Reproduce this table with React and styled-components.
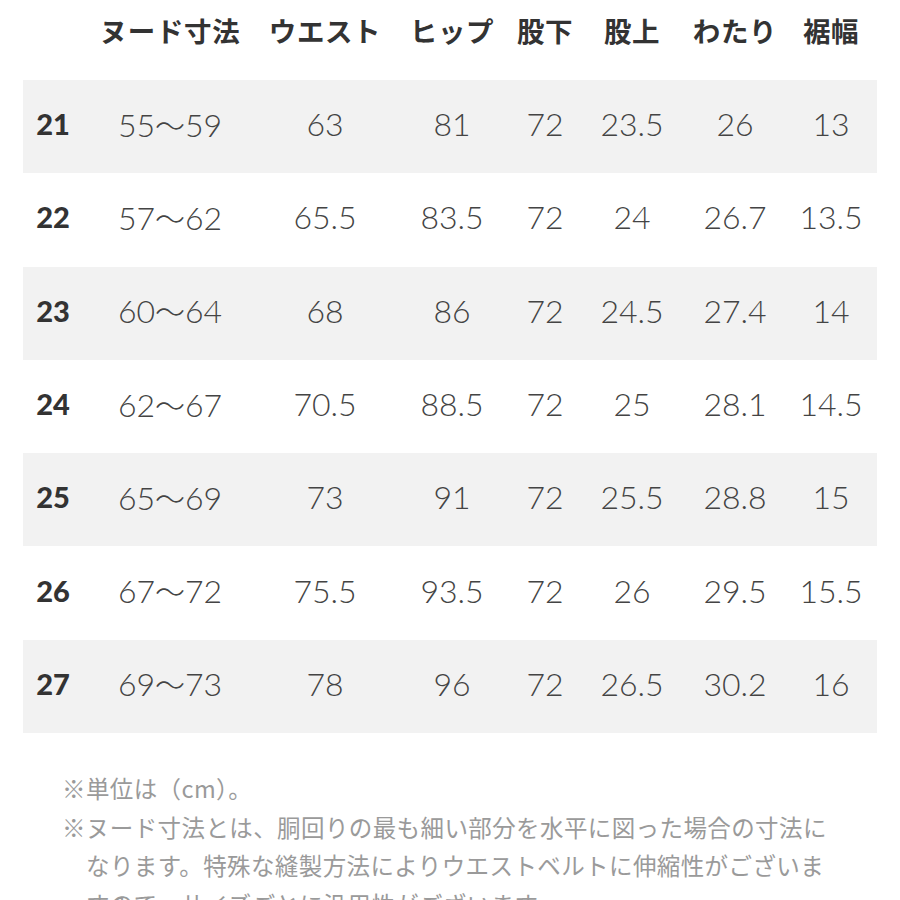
import React from "react";
import styled, { createGlobalStyle } from "styled-components";

const Global = createGlobalStyle`
  html, body { margin: 0; padding: 0; background: #fff; }
  body { font-family: "Noto Sans CJK JP", "Noto Sans", sans-serif; }
`;

const Page = styled.div`
  width: 900px;
  height: 900px;
  overflow: hidden;
  background: #fff;
  padding: 0 23px;
  box-sizing: border-box;
`;

const COLS = "60px 174px 136px 118px 68px 106px 100px 92px";

const HeaderRow = styled.div`
  display: grid;
  grid-template-columns: ${COLS};
  height: 80px;
  padding-top: 11px;
  box-sizing: border-box;
`;

const HeadCell = styled.div`
  text-align: center;
  font-family: "Noto Sans CJK JP", sans-serif;
  font-weight: 700;
  font-size: 27.5px;
  line-height: 38px;
  color: #333;
  letter-spacing: 0.6px;
  white-space: nowrap;
`;

const Row = styled.div`
  display: grid;
  grid-template-columns: ${COLS};
  height: 93.3px;
  align-items: center;
  background: ${(p) => (p.$shaded ? "#f2f2f2" : "#fff")};
`;

const SizeCell = styled.div`
  text-align: center;
  font-family: "Lato", "Noto Sans", sans-serif;
  font-weight: 900;
  font-size: 29px;
  color: #333;
  padding-bottom: 6px;
`;

const ValueCell = styled.div`
  text-align: center;
  font-family: "Lato", "Noto Sans CJK JP", sans-serif;
  font-weight: 300;
  font-size: 32px;
  color: #444;
  white-space: nowrap;
  padding-bottom: 6px;
`;

const Tilde = styled.span`
  font-family: "Noto Sans CJK JP", sans-serif;
  font-weight: 300;
  font-size: 30px;
`;

const Notes = styled.div`
  padding: 36px 0 0 39px;
  font-family: "Noto Sans CJK JP", sans-serif;
  font-weight: 400;
  font-size: 23.5px;
  letter-spacing: 0.4px;
  line-height: 38.5px;
  color: #9a9a9a;
`;

const Note = styled.p`
  margin: 0;
  padding-left: 24px;
  text-indent: -24px;
  white-space: nowrap;
`;

const headers = ["", "ヌード寸法", "ウエスト", "ヒップ", "股下", "股上", "わたり", "裾幅"];

const rows = [
  ["21", "55〜59", "63", "81", "72", "23.5", "26", "13"],
  ["22", "57〜62", "65.5", "83.5", "72", "24", "26.7", "13.5"],
  ["23", "60〜64", "68", "86", "72", "24.5", "27.4", "14"],
  ["24", "62〜67", "70.5", "88.5", "72", "25", "28.1", "14.5"],
  ["25", "65〜69", "73", "91", "72", "25.5", "28.8", "15"],
  ["26", "67〜72", "75.5", "93.5", "72", "26", "29.5", "15.5"],
  ["27", "69〜73", "78", "96", "72", "26.5", "30.2", "16"],
];

function Value({ text }) {
  if (text.includes("〜")) {
    const [a, b] = text.split("〜");
    return (
      <ValueCell>
        {a}
        <Tilde>〜</Tilde>
        {b}
      </ValueCell>
    );
  }
  return <ValueCell>{text}</ValueCell>;
}

export default function App() {
  return (
    <>
      <Global />
      <Page>
        <HeaderRow>
          {headers.map((h, i) => (
            <HeadCell key={i}>{h}</HeadCell>
          ))}
        </HeaderRow>
        {rows.map((r, i) => (
          <Row key={r[0]} $shaded={i % 2 === 0}>
            <SizeCell>{r[0]}</SizeCell>
            {r.slice(1).map((v, j) => (
              <Value key={j} text={v} />
            ))}
          </Row>
        ))}
        <Notes>
          <Note>※単位は（cm）。</Note>
          <Note>
            ※ヌード寸法とは、胴回りの最も細い部分を水平に図った場合の寸法に
            <br />
            なります。特殊な縫製方法によりウエストベルトに伸縮性がございま
            <br />
            すので、サイズごとに汎用性がございます。
          </Note>
        </Notes>
      </Page>
    </>
  );
}
